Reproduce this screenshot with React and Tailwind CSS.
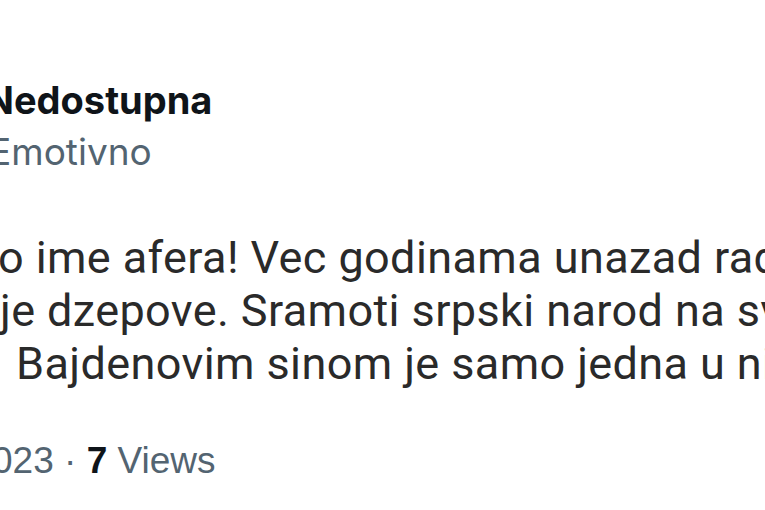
import React from "react";

// 잘린 트윗 캡처 (왼쪽이 잘려 있음)
const bodyLines = [
  { text: "o ime afera! Vec godinama unazad radi", pad: "-ml-[2px]" },
  { text: "je dzepove. Sramoti srpski narod na svetu.", pad: "ml-0" },
  { text: "Bajdenovim sinom je samo jedna u nizu", pad: "ml-[16px]" },
];

function TweetCrop() {
  return (
    <div className="w-[765px] h-[510px] bg-white overflow-hidden">
      <div className="pt-[78px] whitespace-nowrap">
        {/* name */}
        <div className="-ml-[15px] text-[38px] leading-[44px] font-bold text-[#0f1419] font-['Inter',sans-serif]">
          Nedostupna
        </div>
        {/* handle */}
        <div className="mt-[8px] -ml-[11px] text-[37px] leading-[44px] text-[#536471] font-['Inter',sans-serif]">
          Emotivno
        </div>

        {/* body */}
        <div className="mt-[57px] text-[45px] leading-[53px] tracking-[0.4px] text-[#2a2a2a] font-['Roboto',sans-serif]">
          {bodyLines.map((line) => (
            <div key={line.text} className={line.pad}>
              {line.text}
            </div>
          ))}
        </div>

        {/* meta */}
        <div className="mt-[49px] -ml-[8px] text-[37px] leading-[44px] text-[#536471] font-['Liberation_Sans',sans-serif]">
          023 · <span className="font-bold text-[#0f1419]">7</span> Views
        </div>
      </div>
    </div>
  );
}

export default function App() {
  return <TweetCrop />;
}
